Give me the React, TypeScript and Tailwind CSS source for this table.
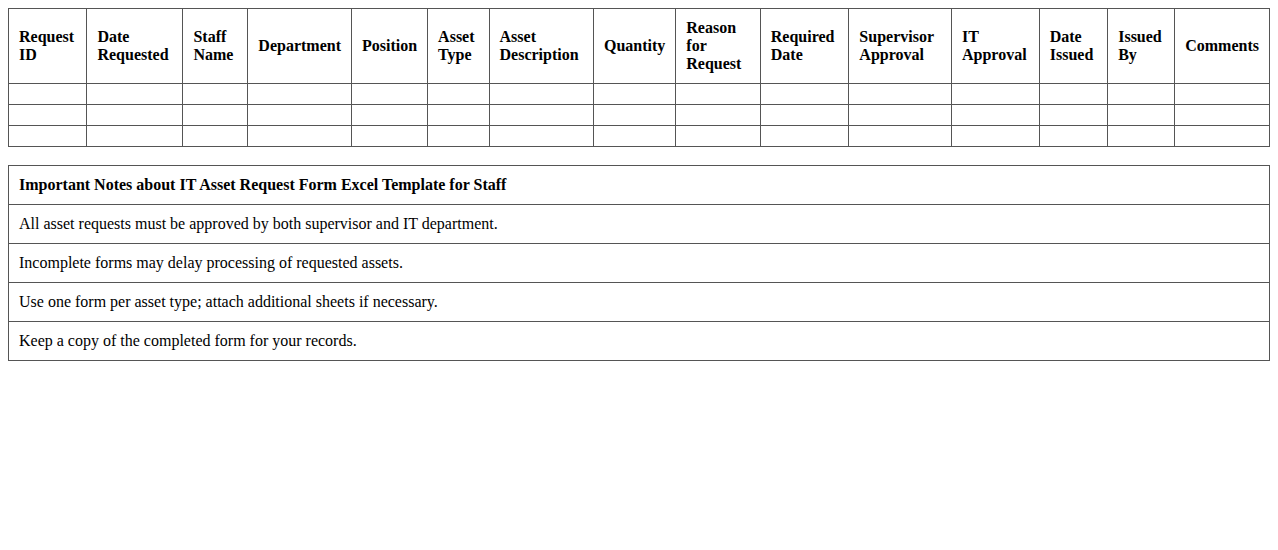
const HEADERS = [
  'Request ID',
  'Date Requested',
  'Staff Name',
  'Department',
  'Position',
  'Asset Type',
  'Asset Description',
  'Quantity',
  'Reason for Request',
  'Required Date',
  'Supervisor Approval',
  'IT Approval',
  'Date Issued',
  'Issued By',
  'Comments',
]

const NOTES = [
  'All asset requests must be approved by both supervisor and IT department.',
  'Incomplete forms may delay processing of requested assets.',
  'Use one form per asset type; attach additional sheets if necessary.',
  'Keep a copy of the completed form for your records.',
]

const cell = 'border border-[#555] p-[10px] text-left align-middle'

export default function App() {
  return (
    <div className="min-h-[550px] bg-white p-2 text-[16px] leading-[18px] text-black [font-family:'Liberation_Serif','Times_New_Roman',serif]">
      <table className="w-full border-collapse">
        <thead>
          <tr>
            {HEADERS.map((h) => (
              <th key={h} className={`${cell} font-bold`}>
                {h}
              </th>
            ))}
          </tr>
        </thead>
        <tbody>
          {[0, 1, 2].map((r) => (
            <tr key={r}>
              {HEADERS.map((h) => (
                <td key={h} className={cell} />
              ))}
            </tr>
          ))}
        </tbody>
      </table>

      {/* notes */}
      <table className="mt-[18px] w-full border-collapse">
        <thead>
          <tr>
            <th className={`${cell} font-bold`}>Important Notes about IT Asset Request Form Excel Template for Staff</th>
          </tr>
        </thead>
        <tbody>
          {NOTES.map((n) => (
            <tr key={n}>
              <td className={cell}>{n}</td>
            </tr>
          ))}
        </tbody>
      </table>
    </div>
  )
}
